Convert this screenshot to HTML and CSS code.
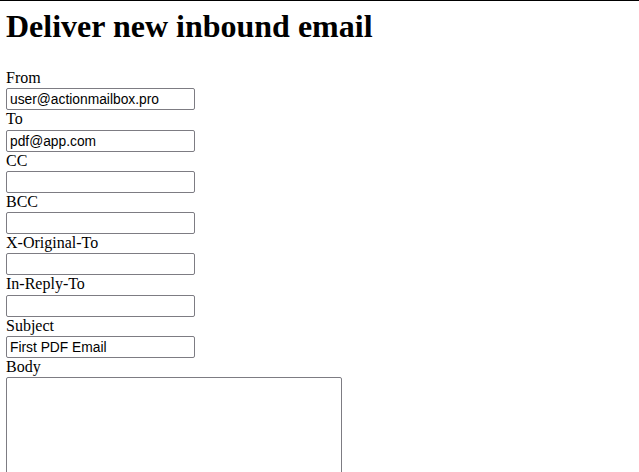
FILE: index.html
```html
<!DOCTYPE html>
<html>
<head>
<meta charset="utf-8">
<link rel="stylesheet" href="styles.css">
</head>
<body>
<div class="topline"></div>
<main class="page">
  <h1 class="title">Deliver new inbound email</h1>
  <form class="form">
    <div class="field"><label class="label">From</label><input class="input" type="text" value="user@actionmailbox.pro"></div>
    <div class="field"><label class="label">To</label><input class="input" type="text" value="pdf@app.com"></div>
    <div class="field"><label class="label">CC</label><input class="input" type="text"></div>
    <div class="field"><label class="label">BCC</label><input class="input" type="text"></div>
    <div class="field"><label class="label">X-Original-To</label><input class="input" type="text"></div>
    <div class="field"><label class="label">In-Reply-To</label><input class="input" type="text"></div>
    <div class="field"><label class="label">Subject</label><input class="input" type="text" value="First PDF Email"></div>
    <div class="field"><label class="label">Body</label><textarea class="textarea"></textarea></div>
  </form>
</main>
</body>
</html>
```
FILE: styles.css
```css
html, body {
  margin: 0;
  padding: 0;
  background: #fff;
}
body {
  font-family: "Liberation Serif", "Times New Roman", serif;
  font-size: 16px;
  color: #000;
  overflow: hidden;
}
.topline {
  height: 1px;
  background: #000;
}
.page {
  padding: 0 6px;
}
.title {
  font-size: 32px;
  font-weight: bold;
  line-height: 36px;
  margin: 7px 0 25px;
}
.form {
  display: flex;
  flex-direction: column;
  margin: 0;
}
.field {
  display: flex;
  flex-direction: column;
  align-items: flex-start;
}
.label {
  line-height: 17px;
  height: 17px;
  padding-bottom: 2.3px;
}
.input {
  box-sizing: border-box;
  width: 189px;
  height: 22px;
  margin: 0;
  padding: 1px 3px 0;
  border: 1px solid #7d7c83;
  border-radius: 2px;
  font-family: "Liberation Sans", Arial, sans-serif;
  font-size: 13.8px;
  color: #000;
  background: #fff;
}
.textarea {
  box-sizing: border-box;
  width: 336px;
  height: 120px;
  margin: 0;
  padding: 2px;
  border: 1px solid #7d7c83;
  border-radius: 2px;
  resize: none;
  background: #fff;
}
```
